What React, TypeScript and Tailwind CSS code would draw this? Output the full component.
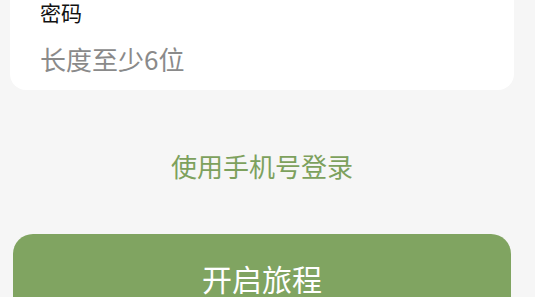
export default function App() {
  return (
    <div
      className="min-h-[297px] bg-[#f6f6f6] overflow-hidden"
      style={{ fontFamily: '"Noto Sans CJK SC", "Noto Sans", sans-serif' }}
    >
      <div className="ml-[10px] w-[504px] flex flex-col">
        {/* password card, top is cut off */}
        <div className="bg-white rounded-b-[16px] pl-[30px] pr-6 pb-[13px]">
          <div className="text-[21px] leading-[25px] text-[#111111]">密码</div>
          <input
            type="password"
            placeholder="长度至少6位"
            className="mt-[16px] w-full h-[36px] text-[26px] leading-[36px] outline-none bg-transparent placeholder:text-[#8a8a8a]"
          />
        </div>

        <div className="mt-[58px] text-center text-[26px] leading-[36px] text-[#7da15d]">
          使用手机号登录
        </div>

        <button className="mt-[50px] mx-[3px] h-[92px] pb-[4px] rounded-[20px] bg-[#80a461] text-white text-[30px] leading-[40px] flex items-center justify-center">
          开启旅程
        </button>
      </div>
    </div>
  );
}
